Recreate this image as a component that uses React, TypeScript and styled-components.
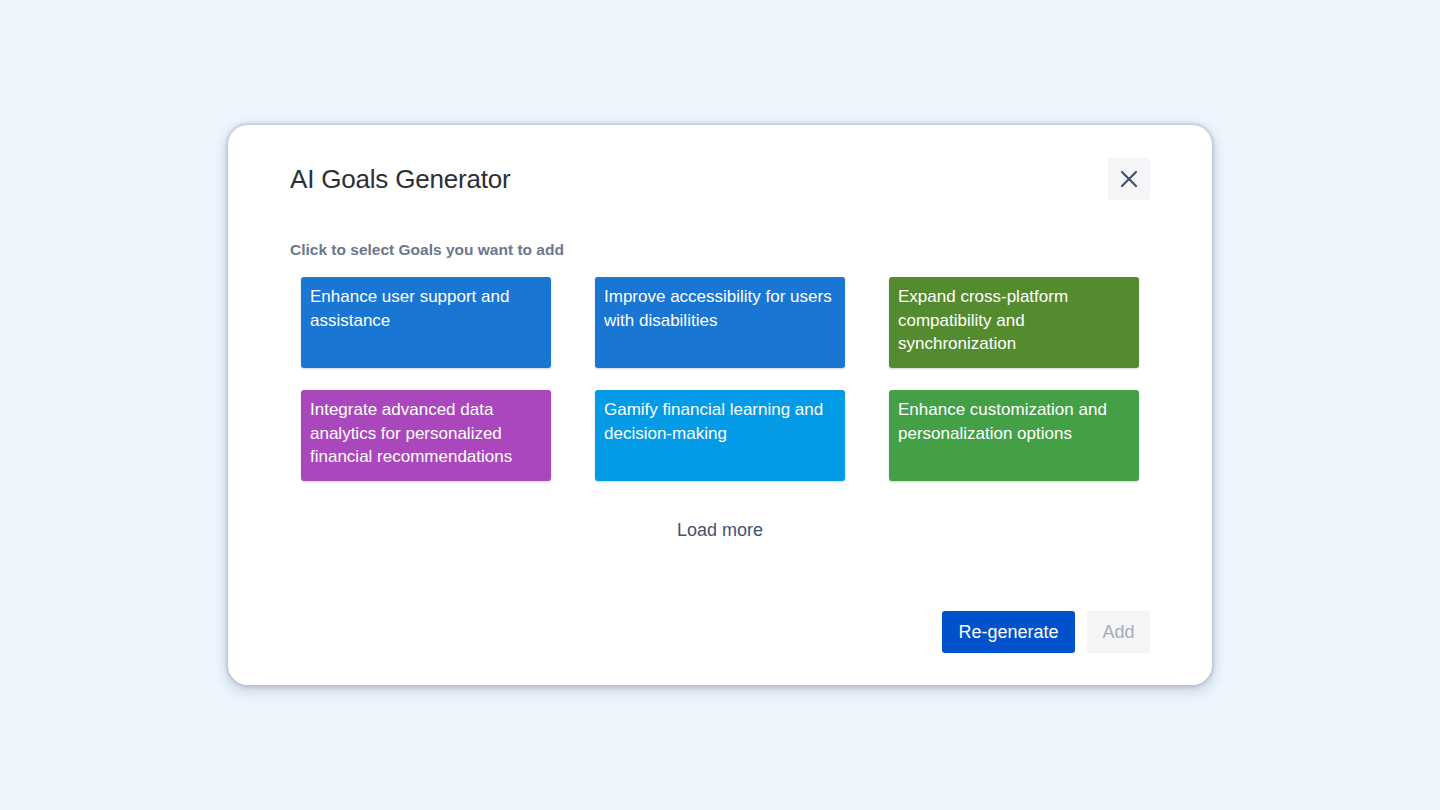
import React from "react";
import styled, { createGlobalStyle } from "styled-components";

const Global = createGlobalStyle`
  html, body {
    margin: 0;
    padding: 0;
    background: #edf5fd;
    font-family: "Liberation Sans", Arial, sans-serif;
  }
`;

const goals = [
  { text: "Enhance user support and assistance", color: "#1976d2" },
  { text: "Improve accessibility for users with disabilities", color: "#1976d2" },
  { text: "Expand cross-platform compatibility and synchronization", color: "#558b2f" },
  { text: "Integrate advanced data analytics for personalized financial recommendations", color: "#ab47bc" },
  { text: "Gamify financial learning and decision-making", color: "#039be5" },
  { text: "Enhance customization and personalization options", color: "#43a047" },
];

const App = () => {
  return (
    <Page>
      <Global />
      <Modal>
        <Header>
          <Title>AI Goals Generator</Title>
          <CloseButton aria-label="Close">
            <svg width="24" height="24" viewBox="0 0 24 24" fill="none">
              <path
                d="M5 5L19 19M19 5L5 19"
                stroke="#42526e"
                strokeWidth="2.2"
                strokeLinecap="round"
              />
            </svg>
          </CloseButton>
        </Header>
        <Hint>Click to select Goals you want to add</Hint>
        <Grid>
          {goals.map((g) => (
            <GoalCard key={g.text} $bg={g.color}>
              {g.text}
            </GoalCard>
          ))}
        </Grid>
        <LoadMore>Load more</LoadMore>
        <Footer>
          <PrimaryButton>Re-generate</PrimaryButton>
          <DisabledButton disabled>Add</DisabledButton>
        </Footer>
      </Modal>
    </Page>
  );
};

const Page = styled.div`
  width: 1440px;
  height: 810px;
  display: flex;
  justify-content: center;
  padding-top: 125px;
  box-sizing: border-box;
`;

const Modal = styled.div`
  width: 984px;
  height: 560px;
  box-sizing: border-box;
  background: #fff;
  border-radius: 20px;
  box-shadow: 0 0 3px 2px rgba(160, 170, 190, 0.45), 0 4px 14px rgba(90, 100, 130, 0.35);
  padding: 33px 62px 32px;
  display: flex;
  flex-direction: column;
`;

const Header = styled.div`
  display: flex;
  align-items: center;
  justify-content: space-between;
  height: 42px;
`;

const Title = styled.h1`
  margin: 0;
  font-size: 26px;
  font-weight: 400;
  color: #2b2f36;
  letter-spacing: -0.2px;
`;

const CloseButton = styled.button`
  width: 42px;
  height: 42px;
  border: none;
  border-radius: 3px;
  background: #f4f5f7;
  display: flex;
  align-items: center;
  justify-content: center;
  padding: 0;
  cursor: pointer;
`;

const Hint = styled.div`
  margin-top: 41px;
  font-size: 15.5px;
  font-weight: 700;
  line-height: 18px;
  color: #6b778c;
`;

const Grid = styled.div`
  margin: 18px 11px 0;
  display: grid;
  grid-template-columns: repeat(3, 250px);
  column-gap: 44px;
  row-gap: 22px;
`;

const GoalCard = styled.div<{ $bg: string }>`
  height: 91px;
  box-sizing: border-box;
  background: ${(p) => p.$bg};
  border-radius: 3px;
  padding: 8px 9px;
  color: #fff;
  font-size: 17px;
  line-height: 23.5px;
  cursor: pointer;
  box-shadow: 0 1px 2px rgba(9, 30, 66, 0.2);
`;

const LoadMore = styled.div`
  margin-top: 38px;
  align-self: center;
  font-size: 18px;
  line-height: 22px;
  color: #42526e;
  cursor: pointer;
`;

const Footer = styled.div`
  margin-top: auto;
  display: flex;
  justify-content: flex-end;
  gap: 12px;
`;

const PrimaryButton = styled.button`
  height: 42px;
  padding: 0 15px;
  width: 133px;
  border: none;
  border-radius: 3px;
  background: #0052cc;
  color: #fff;
  font-family: inherit;
  font-size: 18px;
  cursor: pointer;
`;

const DisabledButton = styled.button`
  height: 42px;
  width: 63px;
  border: none;
  border-radius: 3px;
  background: #f4f5f7;
  color: #a5adba;
  font-family: inherit;
  font-size: 18px;
`;

export default App;
